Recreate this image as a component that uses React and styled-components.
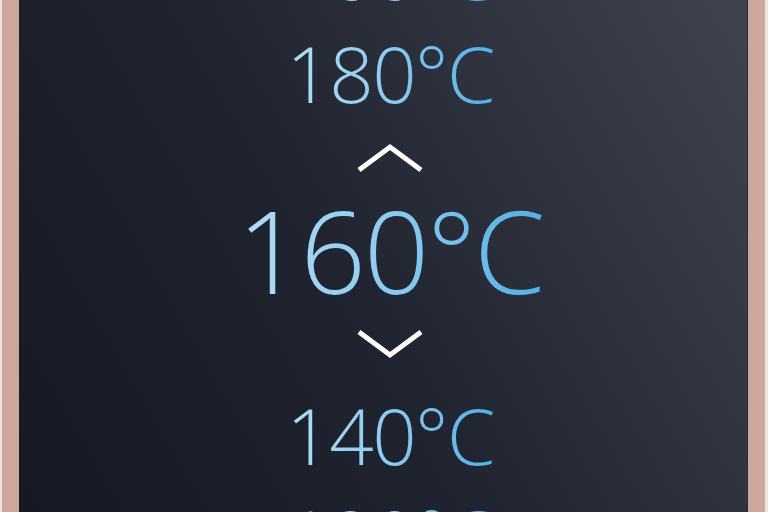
import styled, { createGlobalStyle } from "styled-components";

const GlobalStyle = createGlobalStyle`
  html, body {
    margin: 0;
    padding: 0;
    background: #efe2de;
  }
  #root {
    height: 512px;
  }
`;

export default function App() {
  return (
    <>
      <GlobalStyle />
      <Frame>
        <Panel>
          <Wheel>
            <Slot $h={110}>
              <Value $size={78}>200°C</Value>
            </Slot>
            <Slot $h={95}>
              <Value $size={78}>180°C</Value>
            </Slot>
            <Slot $h={76}>
              <Chevron dir="up" />
            </Slot>
            <Slot $h={106}>
              <Value $size={115}>160°C</Value>
            </Slot>
            <Slot $h={83}>
              <Chevron dir="down" />
            </Slot>
            <Slot $h={100}>
              <Value $size={78}>140°C</Value>
            </Slot>
            <Slot $h={104}>
              <Value $size={78}>120°C</Value>
            </Slot>
          </Wheel>
        </Panel>
      </Frame>
    </>
  );
}

function Chevron({ dir }) {
  const points = dir === "up" ? "4,27 35,4 66,27" : "4,4 35,27 66,4";
  return (
    <ArrowSvg width="70" height="31" viewBox="0 0 70 31">
      <polyline
        points={points}
        fill="none"
        stroke="#ffffff"
        strokeWidth="5"
        strokeLinejoin="miter"
      />
    </ArrowSvg>
  );
}

const Frame = styled.div`
  height: 512px;
  margin: 0 3px 0 2px;
  border-left: 17px solid #cba79e;
  border-right: 17px solid #cba79e;
  display: flex;
  box-sizing: border-box;
`;

const Panel = styled.div`
  flex: 1;
  overflow: hidden;
  background: linear-gradient(60deg, #141923 0%, #1f2430 45%, #40444f 100%);
  box-shadow: inset -1px 0 0 #2a2c33;
`;

const Wheel = styled.div`
  margin-top: -85px;
  padding-left: 13px;
  display: flex;
  flex-direction: column;
  align-items: center;
`;

const Slot = styled.div`
  height: ${(p) => p.$h}px;
  display: flex;
  align-items: center;
  justify-content: center;
  flex-shrink: 0;
`;

const Value = styled.span`
  font-family: "Open Sans", "Liberation Sans", sans-serif;
  font-weight: 300;
  font-size: ${(p) => p.$size}px;
  line-height: 1;
  letter-spacing: ${(p) => -p.$size * 0.02}px;
  background: linear-gradient(90deg, #b2dcf5 0%, #8ccbef 50%, #52b0e6 100%);
  -webkit-background-clip: text;
  background-clip: text;
  color: transparent;
  white-space: nowrap;
`;

const ArrowSvg = styled.svg`
  display: block;
`;
